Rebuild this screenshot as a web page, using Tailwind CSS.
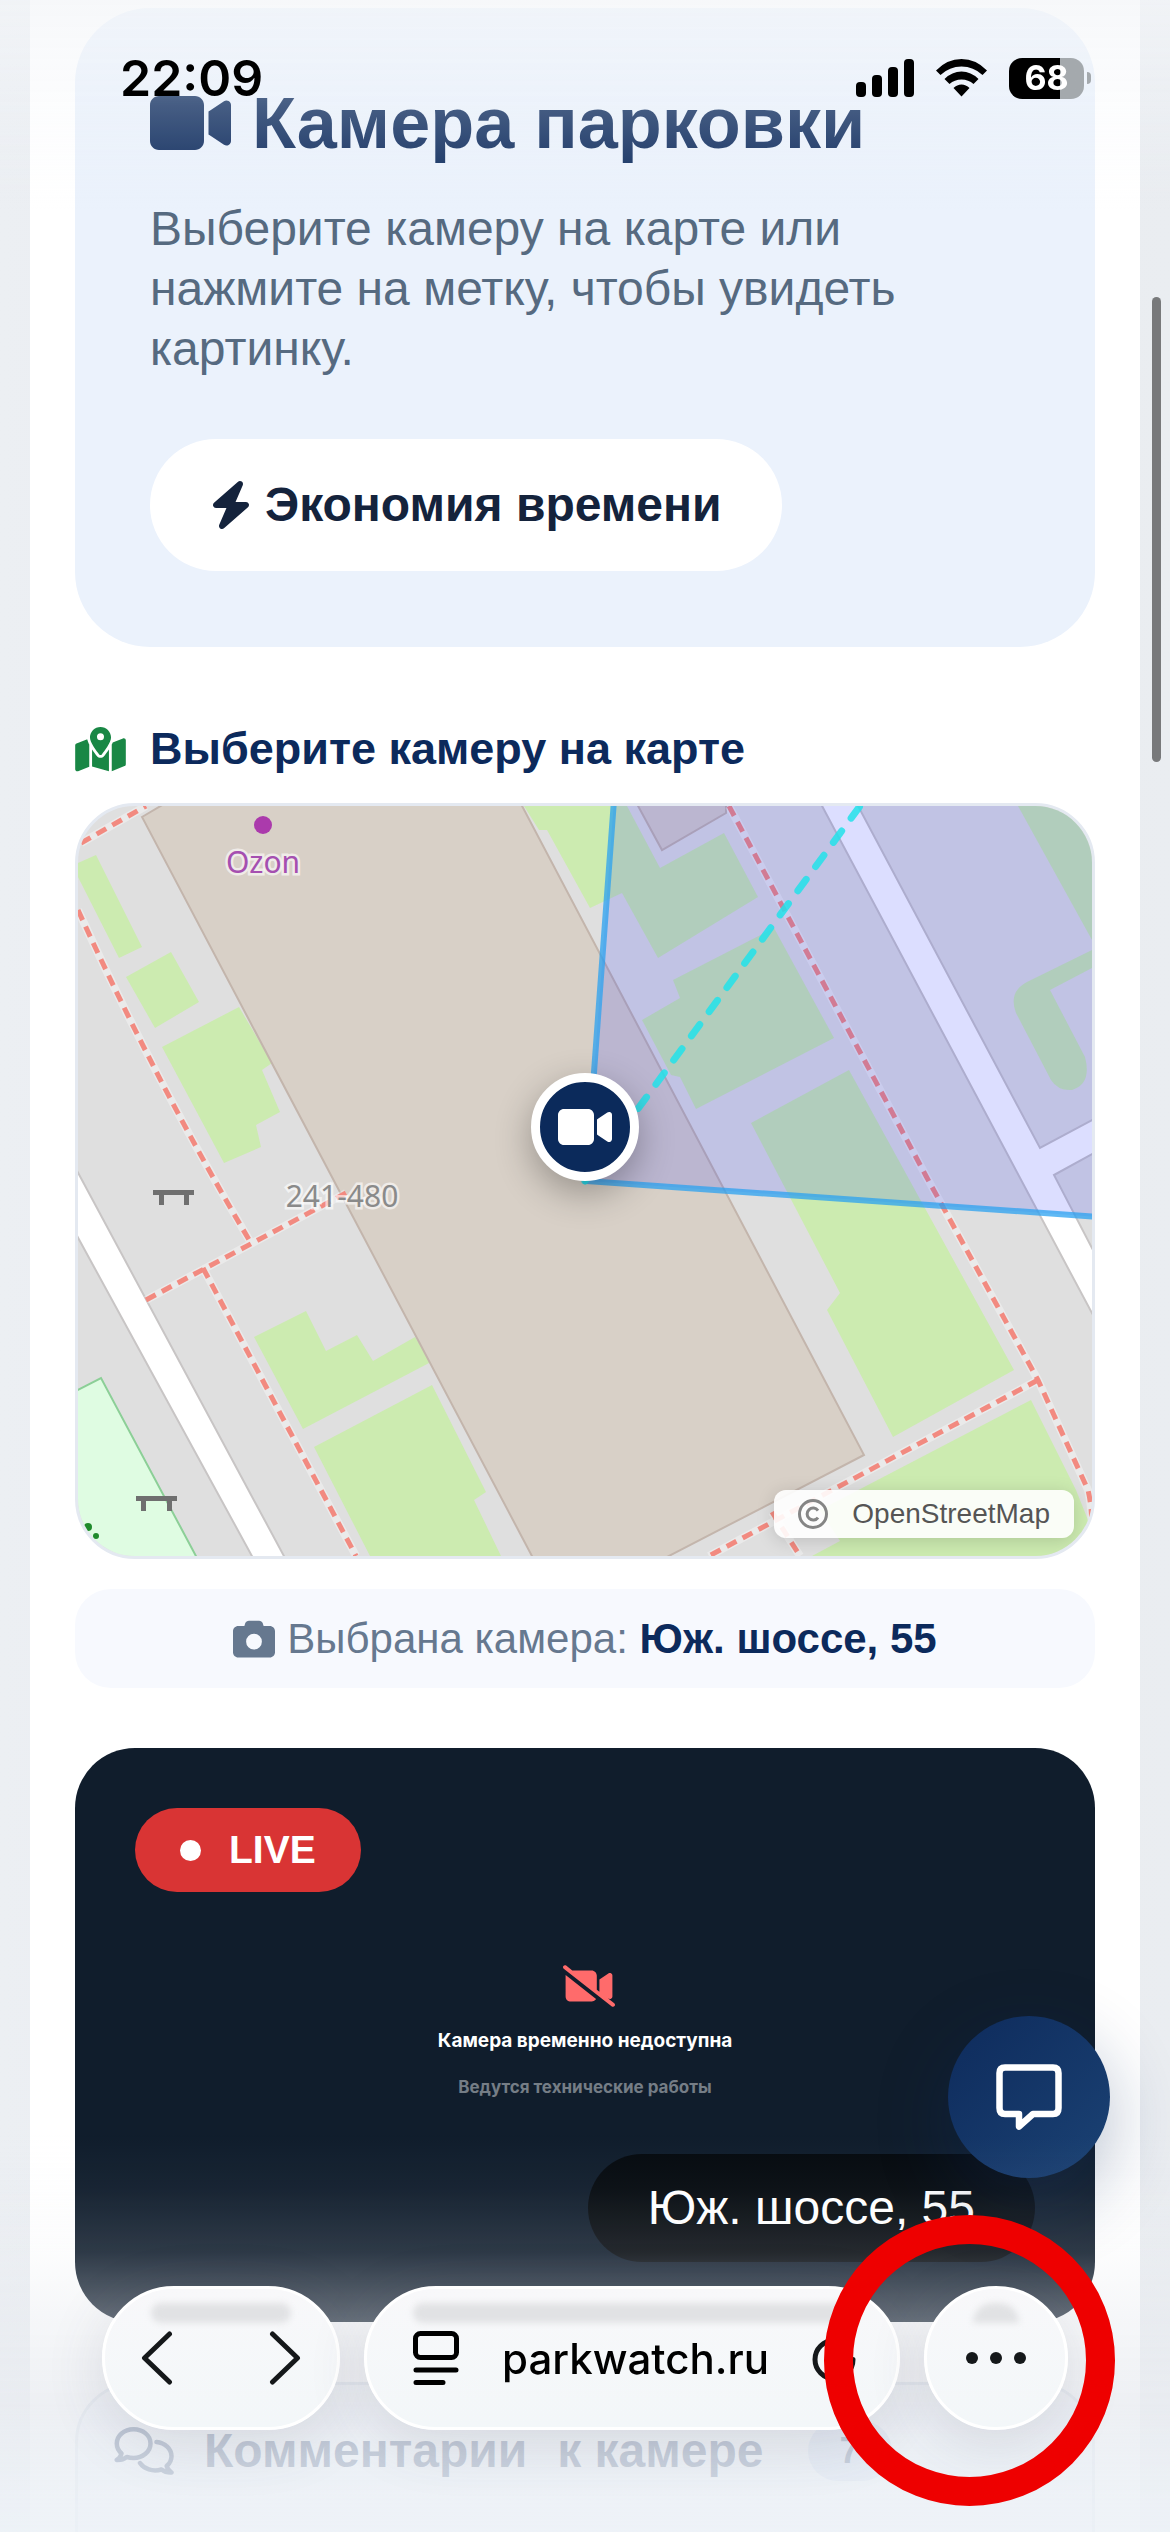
<!DOCTYPE html>
<html lang="ru">
<head>
  <meta charset="UTF-8">
  <meta name="viewport" content="width=device-width, initial-scale=1.0">
  <script src="https://cdn.jsdelivr.net/npm/@tailwindcss/browser@4"></script>
  <title>Камера парковки</title>
</head>
<body class="h-screen overflow-hidden bg-linear-to-r from-[#eceff3] via-[#e6eaee] to-[#eaedf1] font-['Liberation_Sans',Arial,sans-serif]">

  <main class="mx-[30px] h-full overflow-hidden bg-white px-[45px] pt-2">
    <!-- Hero -->
    <section class="rounded-[75px] bg-[#ebf2fc] px-[75px] pt-[75px] pb-[76px]">
      <h1 class="flex items-center gap-[21px] text-[72px] leading-[80px] font-bold text-[#0c2a5c]">
        <svg class="h-[72px] w-[81px] shrink-0" viewBox="0 0 576 512" fill="currentColor"><path d="M0 128C0 92.700 28.700 64 64 64H320c35.300 0 64 28.700 64 64V384c0 35.300-28.700 64-64 64H64c-35.300 0-64-28.700-64-64V128zM559.100 99.800c10.400 5.600 16.900 16.400 16.900 28.200V384c0 11.800-6.500 22.600-16.900 28.200s-23 5-32.900-1.600l-96-64L416 337.100V320 192 174.900l14.200-9.500 96-64c9.800-6.500 22.400-7.200 32.900-1.600z"/></svg>
        Камера парковки
      </h1>
      <p class="mt-9 text-5xl leading-[60px] text-[#566a80]">Выберите камеру на карте или нажмите на метку, чтобы увидеть картинку.</p>
      <div class="mt-[60px] inline-flex h-[132px] items-center gap-[13px] rounded-full bg-white px-[60px] text-5xl font-bold text-[#14233c]">
        <svg class="h-12 w-[42px]" viewBox="0 0 448 512" fill="currentColor"><path d="M349.400 44.600c5.900-13.700 1.500-29.700-10.600-38.500s-28.600-8-39.900 1.800l-256 224c-10 8.800-13.600 22.900-8.900 35.300S50.700 288 64 288H175.500L98.600 467.400c-5.900 13.700-1.500 29.700 10.600 38.500s28.600 8 39.900-1.800l256-224c10-8.800 13.600-22.900 8.900-35.300s-16.600-20.700-30-20.700H272.500L349.400 44.600z"/></svg>
        <span>Экономия времени</span>
      </div>
    </section>

    <h2 class="mt-[75px] mb-[27px] flex items-center gap-6 text-[45px] leading-[54px] font-bold text-[#0c2a5c]">
      <svg class="h-[45px] w-[51px] text-[#198745]" viewBox="0 0 576 512" fill="currentColor"><path d="M408 120c0 54.600-73.100 151.900-105.200 192c-7.700 9.600-22 9.600-29.600 0C241.100 271.900 168 174.600 168 120C168 53.700 221.700 0 288 0s120 53.700 120 120zm8 80.400c3.500-6.900 6.700-13.800 9.600-20.600c.5-1.200 1-2.500 1.500-3.700l116-46.400C558.900 123.400 576 135 576 152V422.800c0 9.800-6 18.600-15.100 22.300L416 503V200.400zM137.600 138.300c2.400 14.100 7.200 28.300 12.800 41.500c2.900 6.800 6.100 13.700 9.600 20.600V451.800L32.900 502.700C17.100 509 0 497.400 0 480.400V209.600c0-9.800 6-18.600 15.100-22.300l122.600-49zM327.800 332c13.900-17.400 35.700-45.700 56.200-77V504.300L192 449.400V255c20.500 31.300 42.300 59.600 56.200 77c20.500 25.600 59.100 25.600 79.600 0zM288 152a40 40 0 1 0 0-80 40 40 0 1 0 0 80z"/></svg>
      Выберите камеру на карте
    </h2>

    <!-- Map -->
    <section class="relative overflow-hidden rounded-[60px] border-3 border-[#e4e9f1] bg-[#dfdfdf]">
      <svg class="block w-full" viewBox="78 806 1014 750">
        <!-- lawns -->
        <g fill="#ccebb0">
          <path d="M78 863L96 855L142 947L119 958L78 877z"/>
          <path d="M126 977L171 952L199 1002L155 1028z"/>
          <path d="M162 1047L239 1007L272 1063L262 1070L280 1112L256 1125L261 1147L224 1163z"/>
          <path d="M524 806L539 830L547 830L590 908L622 893L658 958L758 897L724 833L660 868L627 806z"/>
          <path d="M673 980L774 928L834 1038L696 1109L680 1077L671 1075L642 1020L680 998z"/>
          <path d="M849 1070L751 1123L840 1293L827 1310L893 1437L1014 1370z"/>
          <path d="M1031 1400L820 1510L840 1541L812 1556H1092V1530L1076 1490z"/>
          <path d="M1018 806L1092 940V806z"/>
          <path d="M1092 950L1027 982Q1008 992 1016 1013L1051 1080Q1058 1091 1072 1090Q1092 1084 1085 1057L1050 990L1092 968z"/>
          <path d="M254 1337L306 1311L326 1351L357 1335L373 1361L415 1337L431 1362L303 1429z"/>
          <path d="M314 1447L432 1385L486 1492L474 1500L501 1556H370z"/>
        </g>
        <!-- buildings -->
        <g fill="#d8d0c7" stroke="#c3b5ac" stroke-width="2">
          <path d="M142 817L164 804H521L864 1455L665 1558H533z"/>
          <path d="M637 804L662 850L726 813V804z"/>
        </g>
        <!-- park -->
        <path d="M76 1391L101 1378L197 1558H76z" fill="#dffce2" stroke="#8ccf97" stroke-width="2"/>
        <g fill="#1f8a2c"><circle cx="88" cy="1527" r="4"/><circle cx="96" cy="1536" r="3"/></g>
        <!-- roads -->
        <g fill="#ffffff" stroke="#c8c5c5" stroke-width="2">
          <path d="M76 1169L285 1558H253L76 1234z"/>
          <path d="M821 804H857L1040 1148L1094 1119V1153L1054 1175L1094 1252V1317z"/>
        </g>
        <!-- footways -->
        <g fill="none" stroke="#ffffff" stroke-opacity=".35" stroke-width="8">
          <path d="M81 843L146 806M78 910Q160 1090 251 1243M146 1300L346 1193M203 1268L356 1556M729 806L926 1176L1038 1380L1088 1490Q1094 1515 1090 1545M1038 1380L709 1556M772 1512L800 1556"/>
        </g>
        <g fill="none" stroke="#f28a80" stroke-width="5" stroke-dasharray="11 7">
          <path d="M81 843L146 806"/>
          <path d="M78 910Q160 1090 251 1243"/>
          <path d="M146 1300L346 1193"/>
          <path d="M203 1268L356 1556"/>
          <path d="M729 806L926 1176L1038 1380L1088 1490Q1094 1515 1090 1545"/>
          <path d="M1038 1380L709 1556"/>
          <path d="M772 1512L800 1556"/>
        </g>
        <!-- benches -->
        <g fill="#6f6f6f">
          <path d="M153 1190H194V1195H189V1205H184V1195H164V1205H159V1195H153z"/>
          <path d="M136 1496H177V1501H172V1511H167V1501H146V1511H141V1501H136z"/>
        </g>
        <!-- labels -->
        <circle cx="263" cy="825" r="9" fill="#ab3aac"/>
        <g font-family="Noto Sans, sans-serif" font-size="30" text-anchor="middle" paint-order="stroke" stroke="#ffffff" stroke-opacity=".6" stroke-width="5">
          <text x="263" y="873" fill="#a54fb0">Ozon</text>
          <text x="342" y="1207" fill="#8a8a8a">241-480</text>
        </g>
        <!-- camera view sector -->
        <path d="M586 1181L614 800H1100V1217z" fill="#2532ff" fill-opacity=".16" stroke="#2ba2f0" stroke-opacity=".75" stroke-width="6"/>
        <path d="M585 1181L860 806" stroke="#22e2ea" stroke-opacity=".85" stroke-width="7" stroke-linecap="round" stroke-dasharray="14 16"/>
      </svg>
      <button aria-label="Камера Юж. шоссе, 55" class="absolute top-1/2 left-1/2 flex size-[108px] -translate-x-1/2 -translate-y-full items-center justify-center rounded-full border-[9px] border-white bg-[#0b2a5b] text-white shadow-[0_12px_36px_rgba(0,0,0,0.3)]">
        <svg class="h-12 w-[54px]" viewBox="0 0 576 512" fill="currentColor"><path d="M0 128C0 92.700 28.700 64 64 64H320c35.300 0 64 28.700 64 64V384c0 35.300-28.700 64-64 64H64c-35.300 0-64-28.700-64-64V128zM559.100 99.800c10.400 5.600 16.900 16.400 16.900 28.200V384c0 11.800-6.500 22.600-16.900 28.200s-23 5-32.900-1.600l-96-64L416 337.100V320 192 174.900l14.200-9.500 96-64c9.800-6.500 22.400-7.200 32.900-1.600z"/></svg>
      </button>
      <a href="https://www.openstreetmap.org/copyright" class="absolute right-[18px] bottom-[18px] flex h-12 items-center gap-6 rounded-xl bg-white/90 px-6 text-[28px] text-[#555555] shadow-[0_3px_18px_rgba(0,0,0,0.15)]">
        <svg class="size-[30px]" viewBox="0 0 30 30" fill="none" stroke="#858585" stroke-width="3"><circle cx="15" cy="15" r="13.500"/><path d="M20 11.500a6 6 0 1 0 0 7"/></svg>
        OpenStreetMap
      </a>
    </section>

    <p class="mt-[30px] flex h-[99px] items-center justify-center gap-3 rounded-[36px] bg-[#f7f9fe] text-[42px] text-[#66788f]">
      <svg class="size-[42px]" viewBox="0 0 512 512" fill="currentColor"><path d="M149.100 64.800L138.700 96H64C28.700 96 0 124.700 0 160V416c0 35.300 28.700 64 64 64H448c35.300 0 64-28.700 64-64V160c0-35.300-28.700-64-64-64H373.300L362.900 64.800C356.400 45.200 338.100 32 317.400 32H194.600c-20.700 0-39 13.200-45.500 32.800zM256 192a96 96 0 1 1 0 192 96 96 0 1 1 0-192z"/></svg>
      <span>Выбрана камера: <strong class="text-[#0c2a5c]">Юж. шоссе, 55</strong></span>
    </p>

    <!-- Video -->
    <section class="relative mt-[60px] flex aspect-video flex-col items-center justify-center rounded-[60px] bg-[#101d2c] pb-1 font-[Inter,sans-serif] font-bold">
      <svg class="ml-2 h-[42px] w-[52px] text-[#ff6b6b]" viewBox="0 0 640 512" fill="currentColor"><path d="M38.800 5.100C28.400-3.100 13.300-1.200 5.100 9.200S-1.200 34.700 9.200 42.900l592 464c10.400 8.200 25.500 6.300 33.700-4.100s6.300-25.500-4.100-33.700l-86.400-67.700 13.800 9.200c9.800 6.500 22.400 7.200 32.900 1.600s16.900-16.400 16.900-28.200V128c0-11.800-6.500-22.600-16.900-28.200s-23-5-32.900 1.600l-96 64L448 174.900V192 320v5.800l-32-25.100V128c0-35.300-28.700-64-64-64H113.900L38.800 5.100zM407 416.700L32.300 121.500c-.2 2.100-.3 4.300-.3 6.500V384c0 35.300 28.700 64 64 64H352c23.400 0 43.900-12.600 55-31.300z"/></svg>
      <p class="mt-5 text-[19px] leading-7 text-white">Камера временно недоступна</p>
      <p class="mt-[18px] text-[17px] leading-7 text-[#757d86]">Ведутся технические работы</p>
      <div class="absolute top-[60px] left-[60px] flex h-[84px] items-center gap-[28px] rounded-full bg-[#d93434] px-[45px] font-['Liberation_Sans',Arial,sans-serif] text-[39px] text-white">
        <span class="size-[21px] rounded-full bg-white"></span>LIVE
      </div>
      <div class="absolute right-[60px] bottom-[60px] flex h-[108px] items-center rounded-full bg-black/65 px-[60px] font-['Liberation_Sans',Arial,sans-serif] text-5xl font-normal text-white">Юж. шоссе, 55</div>
    </section>

    <!-- Comments -->
    <section class="mt-[60px] h-[400px] rounded-[60px] border-3 border-[#d8e0ea] bg-[#f2f6fc] px-9 pt-9">
      <h2 class="flex items-center text-5xl leading-[60px] font-bold text-[#0c2a5c]">
        <svg class="mr-[30px] h-12 w-[60px]" viewBox="0 0 60 48" fill="none" stroke="currentColor" stroke-width="4.500" stroke-linejoin="round" stroke-linecap="round"><path d="M19.500 2.300C10 2.300 2.800 8.800 2.800 16.500c0 4 1.800 7.300 4.700 10c-.6 2.600-2.200 5-4.700 6.500c4 .2 7.500-1 10-3c2 .6 4.400 1 6.700 1c9.400 0 17-6.400 17-14.500S29 2.300 19.500 2.300z"/><path d="M42.500 15c8.500.8 15 6.800 15 14.200c0 4-2 7.400-4.800 9.800c.6 2.600 2.300 4.700 4.800 6.500c-4 .2-7.500-1-10-3c-9 2.700-17.500-.6-21.500-6.500"/></svg>
        <span>Комментарии</span>
        <span class="ml-[30px]">к камере</span>
        <span class="ml-11 flex h-[60px] w-[84px] items-center justify-center rounded-full bg-[#c5d6f0] text-4xl">7</span>
      </h2>
    </section>
  </main>

  <!-- Browser chrome fade -->
  <div class="pointer-events-none fixed inset-x-0 top-0 h-[210px] bg-linear-to-b from-[#f3f5f8]/70 via-[#f3f6fa]/25 to-transparent"></div>

  <button aria-label="Открыть чат" class="fixed right-[60px] bottom-[354px] flex size-[162px] items-center justify-center rounded-full bg-linear-to-br from-[#0e2b5c] to-[#1b4274] text-white shadow-[0_24px_72px_rgba(12,42,92,0.3)]">
    <svg class="size-[66px]" viewBox="0 0 66 66" fill="none" stroke="currentColor" stroke-width="6.500" stroke-linejoin="round"><path d="M9 3.500H57Q62.500 3.500 62.500 9V44Q62.500 50 57 50H37L23 62.500V50H9Q3.500 50 3.500 44V9Q3.500 3.500 9 3.500z"/></svg>
  </button>

  <div class="pointer-events-none fixed inset-x-0 bottom-0 h-[400px] bg-[linear-gradient(to_bottom,rgba(232,235,240,0),rgba(232,235,240,0.04)_14%,rgba(232,235,240,0.14)_30%,rgba(232,235,240,0.42)_48%,rgba(232,235,240,0.76)_68%,rgba(235,239,244,0.84)_82%,rgba(237,242,247,0.9)_100%)]"></div>

  <!-- Status bar -->
  <header class="fixed inset-x-0 top-0 flex h-[156px] items-center justify-between pr-[79px] pl-[120px] font-[Inter,sans-serif] text-black">
    <time class="text-[50px] font-semibold">22:09</time>
    <div class="flex items-center gap-[22px]">
      <svg class="h-[38px] w-[58px]" viewBox="0 0 58 38"><rect y="23" width="10" height="15" rx="4"/><rect x="16" y="16" width="10" height="22" rx="4"/><rect x="32" y="8" width="10" height="30" rx="4"/><rect x="48" width="10" height="38" rx="4"/></svg>
      <svg class="h-[38px] w-[51px]" viewBox="0 0 51 38"><path d="M0 11.500Q11 0 25.500 0T51 11.500L46.500 16Q37.500 7.500 25.500 7.500T4.500 16zM8.500 20Q16 12.500 25.500 12.500T42.500 20L37.500 25Q32.500 20.500 25.500 20.500T13.500 25zM17.500 29Q21 25.500 25.500 25.500T33.500 29L25.500 37.500z"/></svg>
      <div class="flex items-center gap-[3px]">
        <span class="flex h-[41px] w-[75px] items-center justify-center rounded-[13px] bg-linear-to-r from-black from-68% to-[#a4a9ad] to-68% text-[34px] leading-none font-bold text-white">68</span>
        <span class="h-3 w-1 rounded-r-full bg-[#a4a9ad]"></span>
      </div>
    </div>
  </header>

  <div class="fixed top-[297px] right-[9px] h-[465px] w-[9px] rounded-full bg-[#78797b]"></div>

  <!-- Bottom toolbar -->
  <nav class="fixed inset-x-0 bottom-[102px] flex h-36 gap-6 px-[102px] font-[Inter,sans-serif] text-[#15181a]">
    <div class="relative flex w-[238px] items-center justify-between rounded-full border-3 border-white bg-linear-to-b from-[#f8f8fa] to-[#f3f7f9] px-9 shadow-[0_12px_60px_rgba(70,70,90,0.14)]">
      <span class="absolute inset-x-[46px] top-[14px] h-5 rounded-full bg-[#e1e2e4] blur-[3px]"></span>
      <button aria-label="Назад"><svg class="h-[54px] w-[32px]" viewBox="0 0 32 54" fill="none" stroke="currentColor" stroke-width="5" stroke-linecap="round" stroke-linejoin="round"><path d="M28.500 3L3.500 27L28.500 51"/></svg></button>
      <button aria-label="Вперёд"><svg class="h-[54px] w-[32px]" viewBox="0 0 32 54" fill="none" stroke="currentColor" stroke-width="5" stroke-linecap="round" stroke-linejoin="round"><path d="M3.500 3L28.500 27L3.500 51"/></svg></button>
    </div>
    <div class="relative flex flex-1 items-center justify-between rounded-full border-3 border-white bg-linear-to-b from-[#f8f8fa] to-[#f3f7f9] pr-[39px] pl-[46px] shadow-[0_12px_60px_rgba(70,70,90,0.14)]">
      <span class="absolute inset-x-[46px] top-[14px] h-5 rounded-full bg-[#e1e2e4] blur-[3px]"></span>
      <button aria-label="Меню страницы"><svg class="h-[54px] w-[46px]" viewBox="0 0 46 54" fill="none" stroke="#000000" stroke-width="5" stroke-linecap="round"><rect x="2.500" y="2.500" width="41" height="24" rx="5"/><path d="M3 39H43M3 51.500H30"/></svg></button>
      <button class="text-[42px] font-medium text-black">parkwatch.ru</button>
      <button aria-label="Обновить"><svg class="h-[54px] w-[46px]" viewBox="0 0 46 54" fill="none" stroke="currentColor" stroke-width="5" stroke-linecap="round" stroke-linejoin="round"><path d="M24 9.500H22A19 19 0 1 0 41 28.500M18 3L25 9.500L18 16"/></svg></button>
    </div>
    <button aria-label="Ещё" class="relative flex w-36 items-center justify-center gap-3 rounded-full border-3 border-white bg-linear-to-b from-[#f8f8fa] to-[#f3f7f9] shadow-[0_12px_60px_rgba(70,70,90,0.14)]">
      <span class="absolute inset-x-[46px] top-[14px] h-5 rounded-t-full bg-[#e1e2e4] blur-[3px]"></span>
      <span class="size-3 rounded-full bg-current"></span>
      <span class="size-3 rounded-full bg-current"></span>
      <span class="size-3 rounded-full bg-current"></span>
    </button>
  </nav>

  <!-- Highlight around the menu button -->
  <div class="pointer-events-none fixed right-[55px] bottom-[26px] size-[291px] rounded-full border-[29px] border-[#ee0000]"></div>
</body>
</html>
